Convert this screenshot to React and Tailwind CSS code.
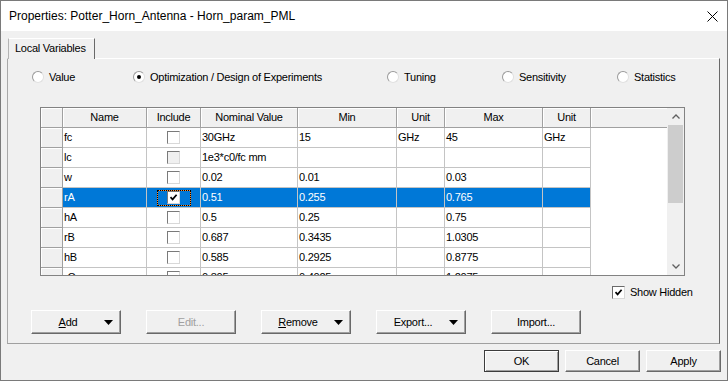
import React from "react";

const rows = [
  ["fc", "30GHz", "15", "GHz", "45", "GHz"],
  ["lc", "1e3*c0/fc mm", "", "", "", ""],
  ["w", "0.02", "0.01", "", "0.03", ""],
  ["rA", "0.51", "0.255", "", "0.765", ""],
  ["hA", "0.5", "0.25", "", "0.75", ""],
  ["rB", "0.687", "0.3435", "", "1.0305", ""],
  ["hB", "0.585", "0.2925", "", "0.8775", ""],
  ["rC", "0.805", "0.4025", "", "1.2075", ""],
];

const headCls =
  "h-[20px] shrink-0 flex items-center justify-center bg-[#f0f0f0] border-r border-b border-[#a0a0a0] shadow-[inset_1px_1px_0_#ffffff]";

function CheckMark({ size = 9 }) {
  return (
    <svg width={size} height={size} viewBox="0 0 9 9">
      <path d="M1.5 4.2 L3.6 6.4 L7.6 1.8" fill="none" stroke="#000" strokeWidth="1.7" />
    </svg>
  );
}

function Check({ checked, disabled }) {
  return (
    <div
      className={`w-[13px] h-[13px] border border-t-[#7a7a7a] border-l-[#7a7a7a] border-r-[#d8d8d8] border-b-[#d8d8d8] flex items-center justify-center ${
        disabled ? "bg-[#f0f0f0]" : "bg-white"
      }`}
    >
      {checked && <CheckMark />}
    </div>
  );
}

function Radio({ on }) {
  return (
    <div className="w-[12px] h-[12px] rounded-full bg-white border border-t-[#9a9a9a] border-l-[#9a9a9a] border-r-[#e0e0e0] border-b-[#e0e0e0] flex items-center justify-center shrink-0">
      {on && <div className="w-[4px] h-[4px] rounded-full bg-black" />}
    </div>
  );
}

function Arrow() {
  return (
    <svg width="9" height="5" viewBox="0 0 9 5" className="mr-[7px] shrink-0">
      <path d="M0 0 L9 0 L4.5 5 Z" fill="#000" />
    </svg>
  );
}

function Btn({ children, arrow, disabled }) {
  return (
    <div className="w-[90px] h-[24px] bg-[#f0f0f0] border border-t-white border-l-white border-r-[#696969] border-b-[#696969] shadow-[inset_-1px_-1px_0_#a0a0a0] flex items-center">
      <span className={`flex-1 text-center ${disabled ? "text-[#a0a0a0]" : "text-black"}`}>{children}</span>
      {arrow && <Arrow />}
    </div>
  );
}

function DlgBtn({ children, def }) {
  return (
    <div
      className={`w-[75px] h-[22px] flex items-center justify-center bg-[#f0f0f0] border ${
        def
          ? "border-[#3c3c3c] shadow-[inset_1px_1px_0_#ffffff,inset_-1px_-1px_0_#a0a0a0]"
          : "border-t-white border-l-white border-r-[#696969] border-b-[#696969] shadow-[inset_-1px_-1px_0_#a0a0a0]"
      }`}
    >
      {children}
    </div>
  );
}

export default function App() {
  const colW = ["w-[84px]", "w-[54px]", "w-[97px]", "w-[99px]", "w-[48px]", "w-[98px]", "w-[48px]"];
  const heads = ["Name", "Include", "Nominal Value", "Min", "Unit", "Max", "Unit"];
  return (
    <div className="w-[728px] h-[381px] bg-[#f0f0f0] border border-[#7a7a7a] flex flex-col overflow-hidden font-['Liberation_Sans',Arial,sans-serif] text-[11px] tracking-[-0.25px] text-black leading-none">
      {/* Title bar */}
      <div className="h-[30px] shrink-0 bg-white flex items-center pl-[8px] pr-[9px]">
        <span className="text-[12px] tracking-normal flex-1">Properties: Potter_Horn_Antenna - Horn_param_PML</span>
        <svg width="11" height="11" viewBox="0 0 11 11">
          <path d="M0.5 0.5 L10.5 10.5 M10.5 0.5 L0.5 10.5" stroke="#000" strokeWidth="1" />
        </svg>
      </div>

      {/* Tab */}
      <div className="mt-[7px] ml-[7px] flex">
        <div className="relative z-10 h-[21px] -mb-[1px] bg-[#f0f0f0] border-t border-l border-r border-t-white border-l-[#b4b4b4] border-r-[#696969] px-[6px] flex items-center pb-[1px] w-[87px]">
          Local Variables
        </div>
      </div>

      {/* Panel */}
      <div className="ml-[6px] w-[713px] h-[286px] shrink-0 border border-t-white border-l-[#a8a8a8] border-r-[#696969] border-b-[#a0a0a0] flex flex-col">
        {/* radios */}
        <div className="mt-[11px] h-[14px] pl-[24px] flex items-center">
          {[
            ["Value", false, "w-[101px]"],
            ["Optimization / Design of Experiments", true, "w-[254px]"],
            ["Tuning", false, "w-[115px]"],
            ["Sensitivity", false, "w-[115px]"],
            ["Statistics", false, "w-[100px]"],
          ].map(([t, on, w]) => (
            <div key={t} className={`${w} flex items-center gap-[5px] shrink-0`}>
              <Radio on={on} />
              <span>{t}</span>
            </div>
          ))}
        </div>

        {/* grid */}
        <div className="mt-[23px] ml-[32px] w-[645px] h-[169px] shrink-0 border border-[#828282] flex bg-white">
          <div className="w-[626px] h-full overflow-hidden flex flex-col">
            <div className="flex shrink-0">
              <div className={`${headCls} w-[22px]`} />
              {heads.map((h, i) => (
                <div key={i} className={`${headCls} ${colW[i]}`}>
                  {h}
                </div>
              ))}
              <div className="h-[20px] flex-1 bg-[#f0f0f0] border-b border-[#a0a0a0] shadow-[inset_1px_1px_0_#ffffff]" />
            </div>
            {rows.map((r, ri) => {
              const sel = r[0] === "rA";
              return (
                <div key={ri} className="flex shrink-0 h-[20px]">
                  <div className={`${headCls} w-[22px]`} />
                  <div
                    className={`${colW[0]} h-[20px] shrink-0 border-r border-b border-[#c4c4c4] pl-[1px] flex items-center ${
                      sel ? "bg-[#0078d7] text-white" : ""
                    }`}
                  >
                    {r[0]}
                  </div>
                  <div
                    className={`${colW[1]} h-[20px] shrink-0 border-r border-b border-[#c4c4c4] flex items-center justify-center ${
                      sel ? "bg-[#0078d7]" : ""
                    }`}
                  >
                    {sel ? (
                      <div className="w-[34px] h-[16px] border border-dotted border-black bg-[#ff8a28] flex">
                        <div className="flex-1 bg-[#0078d7] flex items-center justify-center">
                          <div className="w-[13px] h-[13px] bg-white border border-t-[#7a7a7a] border-l-[#7a7a7a] border-r-[#d8d8d8] border-b-[#d8d8d8] flex items-center justify-center">
                            <CheckMark />
                          </div>
                        </div>
                      </div>
                    ) : (
                      <Check disabled={r[0] === "lc"} />
                    )}
                  </div>
                  {[2, 3, 4, 5, 6].map((ci) => (
                    <div
                      key={ci}
                      className={`${colW[ci]} h-[20px] shrink-0 border-r border-b border-[#c4c4c4] pl-[1px] flex items-center ${
                        sel ? "bg-[#0078d7] text-white" : ""
                      }`}
                    >
                      {r[ci - 1]}
                    </div>
                  ))}
                  <div className="flex-1 h-[20px]" />
                </div>
              );
            })}
          </div>
          {/* scrollbar */}
          <div className="w-[17px] h-full bg-[#f0f0f0] flex flex-col">
            <div className="h-[17px] shrink-0 flex items-center justify-center">
              <svg width="8" height="5" viewBox="0 0 8 5">
                <path d="M0.5 4.5 L4 1 L7.5 4.5" fill="none" stroke="#606060" strokeWidth="1.3" />
              </svg>
            </div>
            <div className="h-[78px] shrink-0 ml-[1px] mr-[1px] bg-[#cdcdcd]" />
            <div className="flex-1" />
            <div className="h-[17px] shrink-0 flex items-center justify-center">
              <svg width="8" height="5" viewBox="0 0 8 5">
                <path d="M0.5 0.5 L4 4 L7.5 0.5" fill="none" stroke="#606060" strokeWidth="1.3" />
              </svg>
            </div>
          </div>
        </div>

        {/* show hidden */}
        <div className="mt-[9px] h-[14px] pl-[604px] flex items-center gap-[5px]">
          <div className="w-[13px] h-[13px] bg-white border border-t-[#6a6a6a] border-l-[#6a6a6a] border-r-[#d8d8d8] border-b-[#d8d8d8] flex items-center justify-center shrink-0">
            <CheckMark />
          </div>
          <span className="whitespace-nowrap">Show Hidden</span>
        </div>

        {/* buttons */}
        <div className="mt-[11px] pl-[23px] flex gap-[25px]">
          <Btn arrow>
            <u>A</u>dd
          </Btn>
          <Btn disabled>Edit...</Btn>
          <Btn arrow>
            <u>R</u>emove
          </Btn>
          <Btn arrow>Export...</Btn>
          <Btn>Import...</Btn>
        </div>
      </div>

      {/* dialog buttons */}
      <div className="mt-[6px] pl-[483px] flex gap-[6px]">
        <DlgBtn def>OK</DlgBtn>
        <DlgBtn>Cancel</DlgBtn>
        <DlgBtn>Apply</DlgBtn>
      </div>
    </div>
  );
}
